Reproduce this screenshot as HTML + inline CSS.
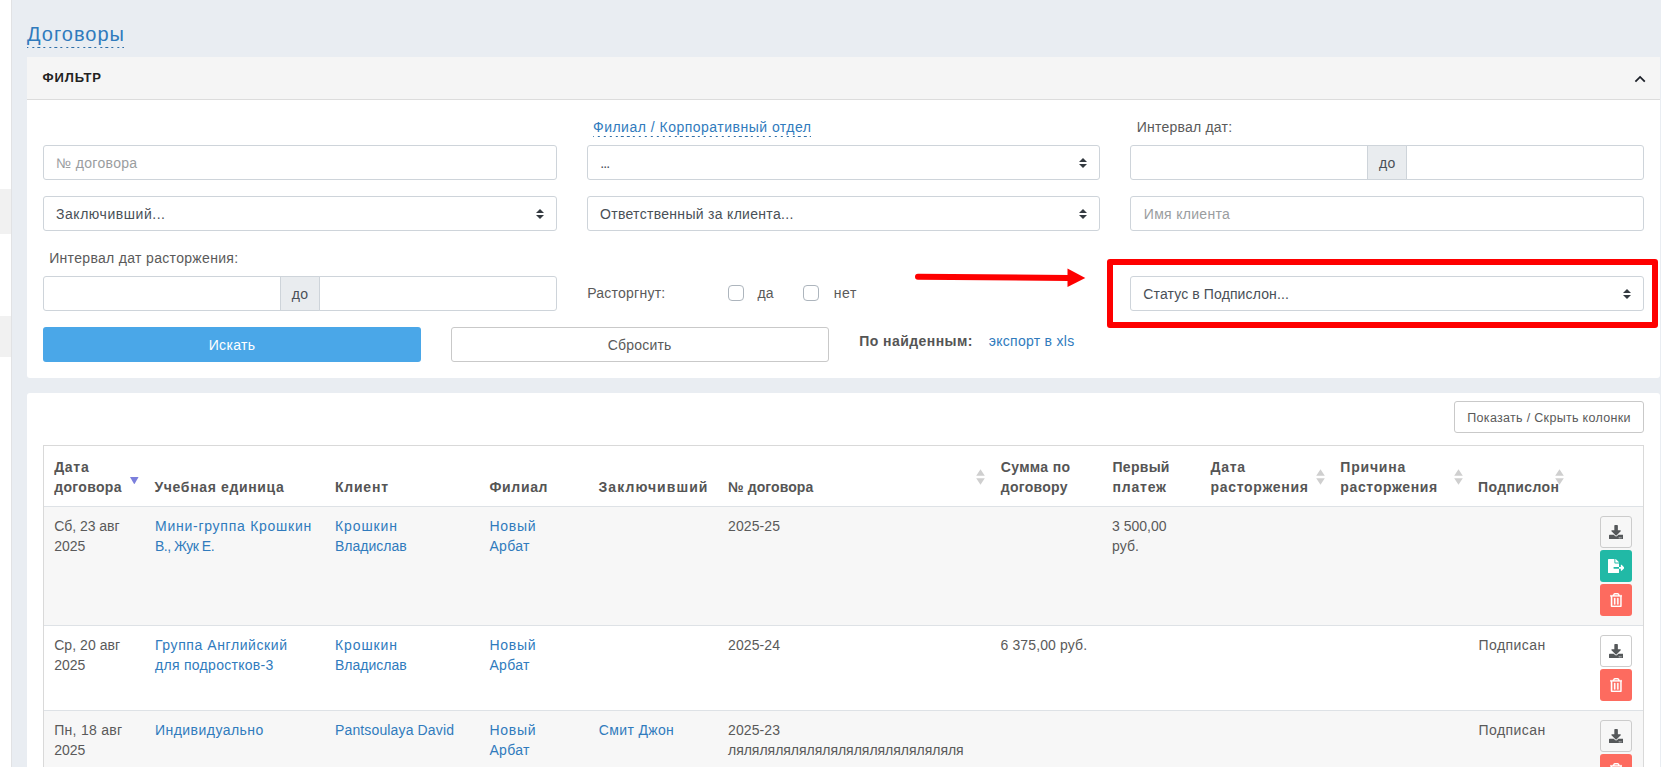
<!DOCTYPE html>
<html lang="ru"><head><meta charset="utf-8"><title>Договоры</title>
<style>
*{box-sizing:border-box;margin:0;padding:0}
h1{font-weight:400;font-size:inherit}
html,body{width:1661px;height:767px;overflow:hidden}
body{position:relative;background:#e9edf2;font-family:"Liberation Sans",sans-serif;font-size:14px;line-height:20px;color:#5a5a5a}
.abs,.t,.fc,.addon,.panel,.ab,.ic,.sa,.ln,.cb,.btn,.stripe{position:absolute}
.t{white-space:pre;line-height:20px}
.side{position:absolute;left:0;top:0;width:12px;height:767px;background:#fff;border-right:1px solid #e1e2e4}
.stripe{left:0;width:11px;background:#f1f1f1}
.panel{background:#fff;border-radius:3px}
.phead{position:absolute;left:27px;top:57px;width:1633px;height:43px;background:#f5f5f5;border-bottom:1px solid #dcdcdc}
.dot{position:absolute;height:1px;background-repeat:repeat-x}
.fc{background:#fff;border:1px solid #ced4da;border-radius:3px}
.gl{border-radius:3px 0 0 3px}
.gr{border-radius:0 3px 3px 0}
.addon{background:#e9ecef;border:1px solid #ced4da}
.sa{top:11.5px;width:8px;height:10px}
.cb{width:16px;height:16px;border:1px solid #adb5bd;border-radius:4px;background:#fff}
.btn{border-radius:3px}
.ln{background:#dee2e6}
.ab{left:1600px;width:32px;height:32px;border-radius:3px}
.dl{border:1px solid #ccc}
.fe{background:#21b9a6}
.tr{background:#fd6b5f}
</style></head><body>
<aside class="side"><div class="stripe" style="top:189px;height:44.5px"></div><div class="stripe" style="top:316px;height:41px"></div></aside>
<main>
<h1><span class="t" style="left:27.0px;top:23.7px;font-size:20px;color:#307bbd;letter-spacing:1.01px;">Договоры</span></h1><div class="dot" style="left:26.7px;top:47px;width:97.3px;background-image:repeating-linear-gradient(90deg,#2f6fa8 0,#2f6fa8 2.2px,transparent 2.2px,transparent 5.67px);background-position:-0.7px 0"></div>
<section class="panel" style="left:27px;top:57px;width:1633px;height:321px;border-radius:0 0 3px 3px"></section>
<header class="phead"></header><span class="t" style="left:42.5px;top:68.0px;font-size:13px;color:#222;font-weight:700;letter-spacing:0.86px;">ФИЛЬТР</span>
<svg class="abs" style="left:1633px;top:72px" width="14" height="13" viewBox="0 0 14 13"><path d="M2.4 9.6L7.1 4.9L11.8 9.6" fill="none" stroke="#1d2129" stroke-width="1.8" stroke-linecap="butt"/></svg>
<form>
<span class="t" style="left:593.0px;top:116.8px;font-size:14px;color:#307bbd;letter-spacing:0.49px;">Филиал / Корпоративный отдел</span><div class="dot" style="left:593px;top:136px;width:218.4px;background-image:repeating-linear-gradient(90deg,#2f6fa8 0,#2f6fa8 2.2px,transparent 2.2px,transparent 5.9px);background-position:-1.2px 0"></div>
<span class="t" style="left:1136.7px;top:116.8px;font-size:14px;color:#5a5a5a;letter-spacing:0.22px;">Интервал дат:</span>
<div class="fc" style="left:43px;top:145px;width:514px;height:35px;"></div><span class="t" style="left:56.2px;top:152.9px;font-size:14px;color:#9a9da0;letter-spacing:0.32px;">№ договора</span>
<div class="fc sel" style="left:587px;top:145px;width:513px;height:35px;"><svg class="sa" viewBox="0 0 4 5" style="left:491px"><path fill="#343a40" d="M2 0L0 2h4zm0 5L0 3h4z"/></svg></div><span class="t" style="left:600.3px;top:152.9px;font-size:14px;color:#495057;letter-spacing:-0.94px;">...</span>
<div class="fc gl" style="left:1130px;top:145px;width:238px;height:35px;"></div><div class="addon" style="left:1367px;top:145px;width:40px;height:35px;"></div><div class="fc gr" style="left:1406px;top:145px;width:238px;height:35px;"></div><span class="t" style="left:1379.0px;top:152.9px;font-size:14px;color:#495057;letter-spacing:0.33px;">до</span>
<div class="fc sel" style="left:43px;top:196px;width:514px;height:35px;"><svg class="sa" viewBox="0 0 4 5" style="left:492px"><path fill="#343a40" d="M2 0L0 2h4zm0 5L0 3h4z"/></svg></div><span class="t" style="left:56.0px;top:203.8px;font-size:14px;color:#495057;letter-spacing:0.54px;">Заключивший...</span>
<div class="fc sel" style="left:587px;top:196px;width:513px;height:35px;"><svg class="sa" viewBox="0 0 4 5" style="left:491px"><path fill="#343a40" d="M2 0L0 2h4zm0 5L0 3h4z"/></svg></div><span class="t" style="left:600.0px;top:203.8px;font-size:14px;color:#495057;letter-spacing:0.3px;">Ответственный за клиента...</span>
<div class="fc" style="left:1130px;top:196px;width:514px;height:35px;"></div><span class="t" style="left:1143.8px;top:203.8px;font-size:14px;color:#9a9da0;letter-spacing:0.3px;">Имя клиента</span>
<span class="t" style="left:49.2px;top:247.6px;font-size:14px;color:#5a5a5a;letter-spacing:0.32px;">Интервал дат расторжения:</span>
<div class="fc gl" style="left:43px;top:276px;width:238px;height:35px;"></div><div class="addon" style="left:280px;top:276px;width:40px;height:35px;"></div><div class="fc gr" style="left:319px;top:276px;width:238px;height:35px;"></div><span class="t" style="left:291.7px;top:283.8px;font-size:14px;color:#495057;letter-spacing:0.33px;">до</span>
<span class="t" style="left:587.2px;top:282.9px;font-size:14px;color:#5a5a5a;letter-spacing:0.24px;">Расторгнут:</span>
<div class="cb" style="left:728px;top:285px"></div><span class="t" style="left:757.5px;top:282.9px;font-size:14px;color:#5a5a5a;">да</span>
<div class="cb" style="left:802.5px;top:285px"></div><span class="t" style="left:833.7px;top:282.9px;font-size:14px;color:#5a5a5a;letter-spacing:0.57px;">нет</span>
<svg class="abs" style="left:905px;top:260px" width="190" height="36" viewBox="905 260 190 36"><path d="M918 276.7L1069 277.9" stroke="#fe0000" stroke-width="6" stroke-linecap="round" fill="none"/><path d="M1067.5 268.6L1085.3 277.9L1067.5 286.9z" fill="#fe0000"/></svg>
<div class="abs" style="left:1107px;top:259px;width:551px;height:69px;border:6px solid #fe0000;border-radius:3px"></div>
<div class="fc sel" style="left:1130px;top:276px;width:514px;height:35px;"><svg class="sa" viewBox="0 0 4 5" style="left:492px"><path fill="#343a40" d="M2 0L0 2h4zm0 5L0 3h4z"/></svg></div><span class="t" style="left:1143.3px;top:283.8px;font-size:14px;color:#495057;letter-spacing:0.12px;">Статус в Подпислон...</span>
<div class="btn" style="left:43px;top:327px;width:378px;height:35px;background:#4aa7e8"></div><span class="t" style="left:208.7px;top:334.8px;font-size:14px;color:#fff;letter-spacing:0.32px;">Искать</span>
<div class="btn" style="left:451px;top:327px;width:378px;height:35px;background:#fff;border:1px solid #c9c9c9"></div><span class="t" style="left:607.8px;top:334.8px;font-size:14px;color:#5a5a5a;letter-spacing:0.18px;">Сбросить</span>
<span class="t" style="left:859.2px;top:331.4px;font-size:14px;color:#555555;font-weight:700;letter-spacing:0.45px;">По найденным:</span><span class="t" style="left:988.8px;top:331.4px;font-size:14px;color:#307bbd;letter-spacing:0.28px;">экспорт в xls</span>
</form>
<section class="panel" style="left:27px;top:393px;width:1633px;height:380px"></section>
<div class="btn" style="left:1454px;top:401px;width:190px;height:32px;background:#fff;border:1px solid #c9c9c9"></div><span class="t" style="left:1467.3px;top:407.7px;font-size:12.5px;color:#5a5a5a;letter-spacing:0.31px;">Показать / Скрыть колонки</span>
<div class="abs" style="left:43px;top:445px;width:1601px;height:330px;border:1px solid #d9d9d9;background:#fff"></div>
<div class="abs" style="left:44px;top:507px;width:1599px;height:118px;background:#f7f7f7"></div>
<div class="abs" style="left:44px;top:711px;width:1599px;height:60px;background:#f7f7f7"></div>
<div class="ln" style="left:44px;top:506px;width:1599px;height:1px"></div>
<div class="ln" style="left:44px;top:625px;width:1599px;height:1px"></div>
<div class="ln" style="left:44px;top:710px;width:1599px;height:1px"></div>
<div class="thead">
<span class="t" style="left:54.2px;top:457.1px;font-size:14px;color:#555555;font-weight:700;letter-spacing:0.7px;">Дата</span>
<span class="t" style="left:54.2px;top:476.8px;font-size:14px;color:#555555;font-weight:700;letter-spacing:0.34px;">договора</span>
<span class="t" style="left:154.5px;top:476.8px;font-size:14px;color:#555555;font-weight:700;letter-spacing:0.64px;">Учебная единица</span>
<span class="t" style="left:335.0px;top:476.8px;font-size:14px;color:#555555;font-weight:700;letter-spacing:0.77px;">Клиент</span>
<span class="t" style="left:489.5px;top:476.8px;font-size:14px;color:#555555;font-weight:700;letter-spacing:0.65px;">Филиал</span>
<span class="t" style="left:598.5px;top:476.8px;font-size:14px;color:#555555;font-weight:700;letter-spacing:1.07px;">Заключивший</span>
<span class="t" style="left:728.0px;top:476.8px;font-size:14px;color:#555555;font-weight:700;letter-spacing:0.09px;">№ договора</span>
<span class="t" style="left:1000.8px;top:457.1px;font-size:14px;color:#555555;font-weight:700;letter-spacing:0.32px;">Сумма по</span>
<span class="t" style="left:1000.8px;top:476.8px;font-size:14px;color:#555555;font-weight:700;letter-spacing:0.28px;">договору</span>
<span class="t" style="left:1112.5px;top:457.1px;font-size:14px;color:#555555;font-weight:700;letter-spacing:0.28px;">Первый</span>
<span class="t" style="left:1112.5px;top:476.8px;font-size:14px;color:#555555;font-weight:700;letter-spacing:0.79px;">платеж</span>
<span class="t" style="left:1210.5px;top:457.1px;font-size:14px;color:#555555;font-weight:700;letter-spacing:0.7px;">Дата</span>
<span class="t" style="left:1210.5px;top:476.8px;font-size:14px;color:#555555;font-weight:700;letter-spacing:0.7px;">расторжения</span>
<span class="t" style="left:1340.3px;top:457.1px;font-size:14px;color:#555555;font-weight:700;letter-spacing:0.8px;">Причина</span>
<span class="t" style="left:1340.3px;top:476.8px;font-size:14px;color:#555555;font-weight:700;letter-spacing:0.65px;">расторжения</span>
<span class="t" style="left:1478.0px;top:476.8px;font-size:14px;color:#555555;font-weight:700;letter-spacing:0.39px;">Подпислон</span>
<svg class="abs" style="left:130.3px;top:476.6px" width="8.6" height="7.4" viewBox="0 0 8.6 7.4"><path fill="#7b7fdc" d="M0 0H8.6L4.3 7.4z"/></svg>
<svg class="abs" style="left:975.7px;top:468.5px" width="9" height="16" viewBox="0 0 9 16"><path fill="#cfcfcf" d="M4.5 0.3L8.8 6.8H0.2zM4.5 15.7L0.2 9.2H8.8z"/></svg>
<svg class="abs" style="left:1315.5px;top:468.5px" width="9" height="16" viewBox="0 0 9 16"><path fill="#cfcfcf" d="M4.5 0.3L8.8 6.8H0.2zM4.5 15.7L0.2 9.2H8.8z"/></svg>
<svg class="abs" style="left:1453.9px;top:468.5px" width="9" height="16" viewBox="0 0 9 16"><path fill="#cfcfcf" d="M4.5 0.3L8.8 6.8H0.2zM4.5 15.7L0.2 9.2H8.8z"/></svg>
<svg class="abs" style="left:1554.7px;top:468.5px" width="9" height="16" viewBox="0 0 9 16"><path fill="#cfcfcf" d="M4.5 0.3L8.8 6.8H0.2zM4.5 15.7L0.2 9.2H8.8z"/></svg>
</div><div class="tbody">
<span class="t" style="left:54.2px;top:515.8px;font-size:14px;color:#5a5a5a;letter-spacing:-0.04px;">Сб, 23 авг</span>
<span class="t" style="left:54.2px;top:535.8px;font-size:14px;color:#5a5a5a;letter-spacing:-0.05px;">2025</span>
<span class="t" style="left:155.0px;top:515.8px;font-size:14px;color:#307bbd;letter-spacing:0.74px;">Мини-группа Крошкин</span>
<span class="t" style="left:155.0px;top:535.8px;font-size:14px;color:#307bbd;letter-spacing:-0.5px;">В., Жук Е.</span>
<span class="t" style="left:335.0px;top:515.8px;font-size:14px;color:#307bbd;letter-spacing:0.89px;">Крошкин</span>
<span class="t" style="left:335.0px;top:535.8px;font-size:14px;color:#307bbd;letter-spacing:0.01px;">Владислав</span>
<span class="t" style="left:489.5px;top:515.8px;font-size:14px;color:#307bbd;letter-spacing:0.7px;">Новый</span>
<span class="t" style="left:489.5px;top:535.8px;font-size:14px;color:#307bbd;letter-spacing:0.27px;">Арбат</span>
<span class="t" style="left:728.0px;top:515.8px;font-size:14px;color:#5a5a5a;letter-spacing:0.1px;">2025-25</span>
<span class="t" style="left:1112.0px;top:515.8px;font-size:14px;color:#5a5a5a;">3 500,00</span>
<span class="t" style="left:1112.0px;top:535.8px;font-size:14px;color:#5a5a5a;letter-spacing:0.1px;">руб.</span>
<span class="t" style="left:54.2px;top:635.1px;font-size:14px;color:#5a5a5a;letter-spacing:0.06px;">Ср, 20 авг</span>
<span class="t" style="left:54.2px;top:655.1px;font-size:14px;color:#5a5a5a;letter-spacing:-0.05px;">2025</span>
<span class="t" style="left:155.0px;top:635.1px;font-size:14px;color:#307bbd;letter-spacing:0.58px;">Группа Английский</span>
<span class="t" style="left:155.0px;top:655.1px;font-size:14px;color:#307bbd;letter-spacing:0.29px;">для подростков-3</span>
<span class="t" style="left:335.0px;top:635.1px;font-size:14px;color:#307bbd;letter-spacing:0.89px;">Крошкин</span>
<span class="t" style="left:335.0px;top:655.1px;font-size:14px;color:#307bbd;letter-spacing:0.01px;">Владислав</span>
<span class="t" style="left:489.5px;top:635.1px;font-size:14px;color:#307bbd;letter-spacing:0.7px;">Новый</span>
<span class="t" style="left:489.5px;top:655.1px;font-size:14px;color:#307bbd;letter-spacing:0.27px;">Арбат</span>
<span class="t" style="left:728.0px;top:635.1px;font-size:14px;color:#5a5a5a;letter-spacing:0.1px;">2025-24</span>
<span class="t" style="left:1000.5px;top:635.1px;font-size:14px;color:#5a5a5a;letter-spacing:0.12px;">6 375,00 руб.</span>
<span class="t" style="left:1478.5px;top:635.1px;font-size:14px;color:#5a5a5a;letter-spacing:0.45px;">Подписан</span>
<span class="t" style="left:54.2px;top:720.1px;font-size:14px;color:#5a5a5a;letter-spacing:0.29px;">Пн, 18 авг</span>
<span class="t" style="left:54.2px;top:740.1px;font-size:14px;color:#5a5a5a;letter-spacing:-0.05px;">2025</span>
<span class="t" style="left:155.0px;top:720.1px;font-size:14px;color:#307bbd;letter-spacing:0.46px;">Индивидуально</span>
<span class="t" style="left:335.0px;top:720.1px;font-size:14px;color:#307bbd;letter-spacing:0.14px;">Pantsoulaya David</span>
<span class="t" style="left:489.5px;top:720.1px;font-size:14px;color:#307bbd;letter-spacing:0.7px;">Новый</span>
<span class="t" style="left:489.5px;top:740.1px;font-size:14px;color:#307bbd;letter-spacing:0.27px;">Арбат</span>
<span class="t" style="left:598.8px;top:720.1px;font-size:14px;color:#307bbd;letter-spacing:0.35px;">Смит Джон</span>
<span class="t" style="left:728.0px;top:720.1px;font-size:14px;color:#5a5a5a;letter-spacing:0.1px;">2025-23</span>
<span class="t" style="left:728.0px;top:740.1px;font-size:14px;color:#5a5a5a;letter-spacing:-0.02px;">ляляляляляляляляляляляляляляля</span>
<span class="t" style="left:1478.5px;top:720.1px;font-size:14px;color:#5a5a5a;letter-spacing:0.45px;">Подписан</span>
<div class="ab dl" style="top:516px"><svg class="ic" style="left:7.8px;top:7.8px" width="14.2" height="14.2" viewBox="0 0 512 512"><path fill="#55585a" d="M216 0h80c13.300 0 24 10.700 24 24v168h87.700c17.800 0 26.700 21.500 14.100 34.100L269.700 378.300c-7.500 7.500-19.800 7.500-27.300 0L90.100 226.100c-12.600-12.600-3.700-34.100 14.100-34.100H192V24c0-13.300 10.700-24 24-24zm296 376v112c0 13.300-10.700 24-24 24H24c-13.300 0-24-10.700-24-24V376c0-13.300 10.700-24 24-24h146.700l49 49c20.100 20.100 52.500 20.100 72.600 0l49-49H488c13.300 0 24 10.700 24 24zm-124 88c0-11-9-20-20-20s-20 9-20 20 9 20 20 20 20-9 20-20zm64 0c0-11-9-20-20-20s-20 9-20 20 9 20 20 20 20-9 20-20z"/></svg></div>
<div class="ab fe" style="top:550px"><svg class="ic" style="left:7.7px;top:8.5px" width="16.5" height="14.2" viewBox="0 0 576 512" preserveAspectRatio="none"><path fill="#fff" d="M384 121.900c0-6.300-2.500-12.400-7-16.900L279.100 7c-4.500-4.500-10.600-7-17-7H256v128h128zM571 308l-95.700-96.400c-10.100-10.100-27.400-3-27.400 11.300V288h-64v64h64v65.200c0 14.300 17.300 21.400 27.400 11.300L571 332c6.600-6.600 6.600-17.400 0-24zm-379 28v-32c0-8.800 7.200-16 16-16h176V160H248c-13.200 0-24-10.800-24-24V0H24C10.700 0 0 10.700 0 24v464c0 13.300 10.700 24 24 24h336c13.300 0 24-10.700 24-24V352H208c-8.800 0-16-7.200-16-16z"/></svg></div>
<div class="ab tr" style="top:584px"><svg class="ic" style="left:9.8px;top:8.7px" width="12.5" height="14.2" viewBox="0 0 448 512" preserveAspectRatio="none"><path fill="#fff" stroke="#fff" stroke-width="10" d="M268 416h24a12 12 0 0 0 12-12V188a12 12 0 0 0-12-12h-24a12 12 0 0 0-12 12v216a12 12 0 0 0 12 12zM432 80h-82.410l-34-56.700A48 48 0 0 0 274.410 0H173.590a48 48 0 0 0-41.160 23.300L98.410 80H16A16 16 0 0 0 0 96v16a16 16 0 0 0 16 16h16v336a48 48 0 0 0 48 48h288a48 48 0 0 0 48-48V128h16a16 16 0 0 0 16-16V96a16 16 0 0 0-16-16zM171.840 50.910A6 6 0 0 1 177 48h94a6 6 0 0 1 5.150 2.910L293.610 80H154.390zM368 464H80V128h288zm-212-48h24a12 12 0 0 0 12-12V188a12 12 0 0 0-12-12h-24a12 12 0 0 0-12 12v216a12 12 0 0 0 12 12z"/></svg></div>
<div class="ab dl" style="top:635px"><svg class="ic" style="left:7.8px;top:7.8px" width="14.2" height="14.2" viewBox="0 0 512 512"><path fill="#55585a" d="M216 0h80c13.300 0 24 10.700 24 24v168h87.700c17.800 0 26.700 21.500 14.100 34.100L269.700 378.300c-7.500 7.500-19.800 7.500-27.300 0L90.100 226.100c-12.600-12.600-3.700-34.100 14.100-34.100H192V24c0-13.300 10.700-24 24-24zm296 376v112c0 13.300-10.700 24-24 24H24c-13.300 0-24-10.700-24-24V376c0-13.300 10.700-24 24-24h146.700l49 49c20.100 20.100 52.500 20.100 72.600 0l49-49H488c13.300 0 24 10.700 24 24zm-124 88c0-11-9-20-20-20s-20 9-20 20 9 20 20 20 20-9 20-20zm64 0c0-11-9-20-20-20s-20 9-20 20 9 20 20 20 20-9 20-20z"/></svg></div>
<div class="ab tr" style="top:669px"><svg class="ic" style="left:9.8px;top:8.7px" width="12.5" height="14.2" viewBox="0 0 448 512" preserveAspectRatio="none"><path fill="#fff" stroke="#fff" stroke-width="10" d="M268 416h24a12 12 0 0 0 12-12V188a12 12 0 0 0-12-12h-24a12 12 0 0 0-12 12v216a12 12 0 0 0 12 12zM432 80h-82.410l-34-56.700A48 48 0 0 0 274.410 0H173.590a48 48 0 0 0-41.160 23.300L98.410 80H16A16 16 0 0 0 0 96v16a16 16 0 0 0 16 16h16v336a48 48 0 0 0 48 48h288a48 48 0 0 0 48-48V128h16a16 16 0 0 0 16-16V96a16 16 0 0 0-16-16zM171.840 50.910A6 6 0 0 1 177 48h94a6 6 0 0 1 5.150 2.910L293.610 80H154.390zM368 464H80V128h288zm-212-48h24a12 12 0 0 0 12-12V188a12 12 0 0 0-12-12h-24a12 12 0 0 0-12 12v216a12 12 0 0 0 12 12z"/></svg></div>
<div class="ab dl" style="top:720px"><svg class="ic" style="left:7.8px;top:7.8px" width="14.2" height="14.2" viewBox="0 0 512 512"><path fill="#55585a" d="M216 0h80c13.300 0 24 10.700 24 24v168h87.700c17.800 0 26.700 21.500 14.100 34.100L269.700 378.300c-7.500 7.500-19.800 7.500-27.300 0L90.100 226.100c-12.600-12.600-3.700-34.100 14.100-34.100H192V24c0-13.300 10.700-24 24-24zm296 376v112c0 13.300-10.700 24-24 24H24c-13.300 0-24-10.700-24-24V376c0-13.300 10.700-24 24-24h146.700l49 49c20.100 20.100 52.500 20.100 72.600 0l49-49H488c13.300 0 24 10.700 24 24zm-124 88c0-11-9-20-20-20s-20 9-20 20 9 20 20 20 20-9 20-20zm64 0c0-11-9-20-20-20s-20 9-20 20 9 20 20 20 20-9 20-20z"/></svg></div>
<div class="ab tr" style="top:754px"><svg class="ic" style="left:9.8px;top:8.7px" width="12.5" height="14.2" viewBox="0 0 448 512" preserveAspectRatio="none"><path fill="#fff" stroke="#fff" stroke-width="10" d="M268 416h24a12 12 0 0 0 12-12V188a12 12 0 0 0-12-12h-24a12 12 0 0 0-12 12v216a12 12 0 0 0 12 12zM432 80h-82.410l-34-56.700A48 48 0 0 0 274.410 0H173.590a48 48 0 0 0-41.160 23.300L98.410 80H16A16 16 0 0 0 0 96v16a16 16 0 0 0 16 16h16v336a48 48 0 0 0 48 48h288a48 48 0 0 0 48-48V128h16a16 16 0 0 0 16-16V96a16 16 0 0 0-16-16zM171.840 50.910A6 6 0 0 1 177 48h94a6 6 0 0 1 5.150 2.910L293.610 80H154.390zM368 464H80V128h288zm-212-48h24a12 12 0 0 0 12-12V188a12 12 0 0 0-12-12h-24a12 12 0 0 0-12 12v216a12 12 0 0 0 12 12z"/></svg></div>
</div></main></body></html>
